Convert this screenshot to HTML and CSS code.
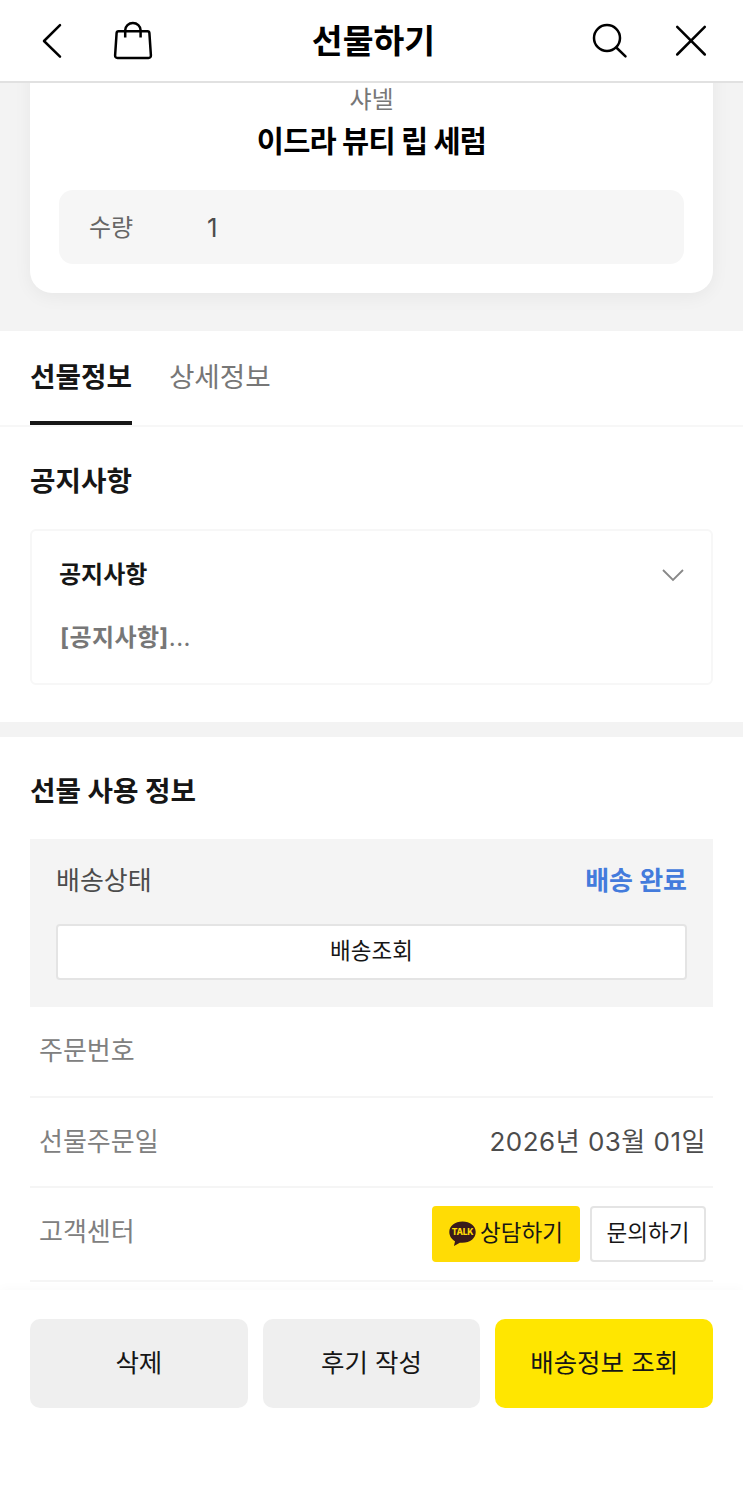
FILE: index.html
```
<!DOCTYPE html>
<html lang="ko">
  <head>
    <meta charset="UTF-8" />
    <title>선물하기</title>
    <link rel="stylesheet" href="styles.css">
  </head>
  <body>
    <header class="header">
      <div class="header-side">
        <svg class="icon-back" width="26" height="40" viewBox="0 0 26 40">
          <path d="M21 4.200 L5 20 L21 35.600" />
        </svg>
        <svg class="icon-bag" width="42" height="42" viewBox="0 0 42 42">
          <path d="M6.500 11.300 H35.500 Q37.300 11.300 37.400 13.100 L38.900 35.300 Q39 37.900 36.500 37.900 H5.500 Q3 37.900 3.100 35.300 L4.600 13.100 Q4.700 11.300 6.500 11.300 Z" />
          <path d="M13.200 17.500 V10.300 A7.700 7.300 0 0 1 28.600 10.300 V17.500" />
        </svg>
      </div>
      <h1 class="header-title">선물하기</h1>
      <div class="header-side right">
        <svg width="40" height="40" viewBox="0 0 40 40">
          <circle cx="17" cy="17" r="13" />
          <path d="M26.300 26.500 L35.500 35.300" />
        </svg>
        <svg width="34" height="34" viewBox="0 0 34 34">
          <path d="M3.200 2.900 L30.800 30.500 M30.800 2.900 L3.200 30.500" />
        </svg>
      </div>
    </header>

    <section class="product">
      <div class="card">
        <p class="brand">샤넬</p>
        <h2 class="product-name">이드라 뷰티 립 세럼</h2>
        <div class="quantity">
          <span class="quantity-label">수량</span>
          <span class="quantity-value">1</span>
        </div>
      </div>
    </section>

    <nav class="tabs">
      <a class="tab active">선물정보</a>
      <a class="tab">상세정보</a>
    </nav>

    <section class="notice">
      <h3 class="section-title">공지사항</h3>
      <div class="notice-box">
        <div class="notice-head">
          <strong>공지사항</strong>
          <svg width="24" height="16" viewBox="0 0 24 16">
            <path d="M3 3 L13 13 L23 3" />
          </svg>
        </div>
        <p class="notice-text"><b>[공지사항]</b>...</p>
      </div>
    </section>

    <section class="usage">
      <h3 class="section-title">선물 사용 정보</h3>
      <div class="delivery">
        <div class="delivery-row">
          <span>배송상태</span>
          <strong class="delivery-status">배송 완료</strong>
        </div>
        <button class="btn btn-track">배송조회</button>
      </div>
      <dl class="info">
        <div class="info-row">
          <dt>주문번호</dt>
          <dd></dd>
        </div>
        <div class="info-row">
          <dt>선물주문일</dt>
          <dd class="order-date">2026년 03월 01일</dd>
        </div>
        <div class="info-row support">
          <dt>고객센터</dt>
          <dd class="support-buttons">
            <button class="btn btn-talk">
              <svg width="27" height="26" viewBox="0 0 27 26">
                <path d="M13.500 0.500 C6 0.500 0.300 5 0.300 11 C0.300 15 2.700 18.300 6 20.200 L5 25 L10.800 21.700 C20.500 22.700 26.700 17.500 26.700 11 C26.700 5 21 0.500 13.500 0.500 Z" />
                <text x="13.500" y="14.200">TALK</text>
              </svg>
              상담하기
            </button>
            <button class="btn btn-ask">문의하기</button>
          </dd>
        </div>
      </dl>
    </section>

    <footer class="bottom-bar">
      <button class="action">삭제</button>
      <button class="action">후기 작성</button>
      <button class="action primary">배송정보 조회</button>
    </footer>
  </body>
</html>
```
FILE: styles.css
```
* {
  box-sizing: border-box;
  margin: 0;
  padding: 0;
}
body {
  font-family: Inter, "Noto Sans CJK KR", sans-serif;
  background: #fff;
  color: #161616;
  height: 1500px;
  overflow: hidden;
}
button {
  font-family: inherit;
  color: #161616;
}
svg {
  display: block;
  fill: none;
  stroke: #000;
  overflow: visible;
}
.header {
  display: flex;
  align-items: center;
  justify-content: space-between;
  height: 83px;
  padding: 0 35px 0 39px;
  border-bottom: 2px solid #e1e1e1;
}
.header svg {
  stroke-width: 2.5;
  stroke-linecap: round;
  stroke-linejoin: round;
}
.header-side {
  display: flex;
  align-items: center;
  width: 160px;
  gap: 47px;
}
.header-side.right {
  justify-content: flex-end;
  gap: 44px;
}
.header .icon-bag {
  stroke-linecap: butt;
}
.header-title {
  font-size: 33.500px;
  line-height: 50px;
  font-weight: 700;
  color: #000;
}
.product {
  background: #f3f3f3;
  height: 248px;
  padding: 0 30px;
  overflow: hidden;
}
.card {
  height: 250px;
  margin-top: -40px;
  background: #fff;
  border-radius: 22px;
  padding: 40px 29px 0;
  text-align: center;
  box-shadow: 0 4px 18px rgba(0, 0, 0, 0.05);
}
.brand {
  font-size: 24px;
  line-height: 34px;
  color: #777;
}
.product-name {
  font-size: 29.500px;
  line-height: 48px;
  letter-spacing: -0.8px;
  font-weight: 700;
  color: #000;
}
.quantity {
  display: flex;
  height: 74px;
  margin-top: 25px;
  padding: 0 30px;
  border-radius: 14px;
  background: #f6f6f6;
  font-size: 24px;
  line-height: 75px;
  color: #4c4c4c;
}
.quantity-label {
  width: 118px;
  text-align: left;
  color: #666;
}
.quantity-value {
  font-size: 26px;
}
.tabs {
  display: flex;
  gap: 37px;
  height: 96px;
  padding: 0 30px;
  border-bottom: 2px solid #f7f7f7;
}
.tab {
  height: 94px;
  font-size: 27.700px;
  line-height: 93px;
  color: #777;
}
.tab.active {
  font-weight: 700;
  color: #161616;
  border-bottom: 4px solid #161616;
}
.notice {
  padding: 33px 30px 37px;
  border-bottom: 15px solid #f3f3f3;
}
.section-title {
  font-size: 27.700px;
  line-height: 42px;
  font-weight: 700;
}
.notice-box {
  height: 156px;
  margin-top: 27px;
  padding: 26px 27px 0;
  border: 2px solid #f7f7f7;
  border-radius: 6px;
}
.notice-head {
  display: flex;
  align-items: center;
  justify-content: space-between;
  font-size: 24px;
  line-height: 36px;
}
.notice-head svg {
  stroke: #888;
  stroke-width: 1.8;
}
.notice-text {
  margin-top: 27px;
  padding-left: 1px;
  font-size: 24px;
  line-height: 36px;
  letter-spacing: 0.4px;
  color: #777;
}
.usage {
  padding: 33px 30px 0;
}
.delivery {
  height: 168px;
  margin-top: 27px;
  padding: 23px 26px 27px;
  background: #f4f4f4;
}
.delivery-row {
  display: flex;
  justify-content: space-between;
  font-size: 26px;
  line-height: 38px;
  color: #4c4c4c;
}
.delivery-status {
  color: #437bdc;
}
.btn {
  height: 56px;
  padding-bottom: 6px;
  font-size: 22.500px;
  background: #fff;
  border: 2px solid #e4e4e4;
  border-radius: 4px;
}
.btn-track {
  display: block;
  width: 100%;
  margin-top: 24px;
}
.info-row {
  display: flex;
  align-items: center;
  justify-content: space-between;
  height: 90.500px;
  padding: 0 7px 0 9px;
  border-bottom: 2px solid #f5f5f5;
  font-size: 26px;
  color: #4c4c4c;
}
.info-row dt {
  padding-bottom: 5px;
  color: #808080;
}
.info-row .order-date {
  padding-bottom: 5px;
  letter-spacing: 0.5px;
}
.info-row.support {
  height: 94px;
}
.support dt {
  padding-bottom: 9px;
}
.support-buttons {
  display: flex;
  gap: 10px;
}
.btn-ask {
  width: 116px;
}
.btn-talk {
  display: flex;
  align-items: center;
  justify-content: center;
  gap: 4px;
  width: 148px;
  background: #ffdc05;
  border-color: #ffdc05;
}
.btn-talk svg {
  margin-top: 5px;
}
.btn-talk path {
  fill: #391b1b;
  stroke: none;
}
.btn-talk text {
  fill: #ffdc05;
  stroke: none;
  font-size: 8.500px;
  font-weight: 800;
  letter-spacing: -0.3px;
  text-anchor: middle;
}
.bottom-bar {
  display: flex;
  gap: 15px;
  height: 210px;
  margin-top: 8px;
  padding: 29px 30px 0;
  background: #fff;
  box-shadow: 0 0 12px rgba(0, 0, 0, 0.03);
}
.action {
  flex: 1;
  height: 89px;
  padding-bottom: 7px;
  border: none;
  border-radius: 10px;
  background: #efefef;
  font-size: 25.500px;
}
.action.primary {
  background: #ffe600;
}
```
